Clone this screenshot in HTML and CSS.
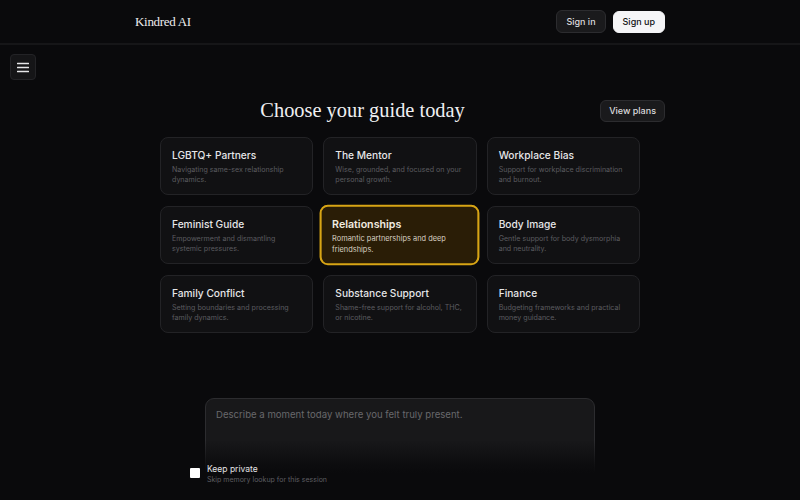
FILE: index.html
```html
<!DOCTYPE html>
<html lang="en">
<head>
    <meta charset="UTF-8">
    <meta name="viewport" content="width=device-width, initial-scale=1.0">
    <title>Kindred AI</title>
    <link rel="stylesheet" href="styles.css">
</head>
<body>

<header class="topbar">
    <div class="topbar-inner">
        <div class="logo">Kindred AI</div>
        <div class="auth">
            <button class="btn btn-dark">Sign in</button>
            <button class="btn btn-light">Sign up</button>
        </div>
    </div>
</header>

<main class="page">
    <!-- кнопка меню -->
    <button class="menu-toggle" aria-label="Menu">
        <svg width="12" height="11" viewBox="0 0 12 11">
            <path d="M0.5 1.5H11.5M0.5 5.5H11.5M0.5 9.5H11.5" stroke="#e6e6e8" stroke-width="1.3" stroke-linecap="round"/>
        </svg>
    </button>

    <div class="title-row">
        <h1 class="title">Choose your guide today</h1>
        <button class="btn btn-dark btn-plans">View plans</button>
    </div>

    <div class="guides">
        <div class="guide">
            <div class="guide-name">LGBTQ+ Partners</div>
            <div class="guide-desc">Navigating same-sex relationship dynamics.</div>
        </div>
        <div class="guide">
            <div class="guide-name">The Mentor</div>
            <div class="guide-desc">Wise, grounded, and focused on your personal growth.</div>
        </div>
        <div class="guide">
            <div class="guide-name">Workplace Bias</div>
            <div class="guide-desc">Support for workplace discrimination and burnout.</div>
        </div>
        <div class="guide">
            <div class="guide-name">Feminist Guide</div>
            <div class="guide-desc">Empowerment and dismantling systemic pressures.</div>
        </div>
        <div class="guide guide-active">
            <div class="guide-name">Relationships</div>
            <div class="guide-desc">Romantic partnerships and deep friendships.</div>
        </div>
        <div class="guide">
            <div class="guide-name">Body Image</div>
            <div class="guide-desc">Gentle support for body dysmorphia and neutrality.</div>
        </div>
        <div class="guide">
            <div class="guide-name">Family Conflict</div>
            <div class="guide-desc">Setting boundaries and processing family dynamics.</div>
        </div>
        <div class="guide">
            <div class="guide-name">Substance Support</div>
            <div class="guide-desc">Shame-free support for alcohol, THC, or nicotine.</div>
        </div>
        <div class="guide">
            <div class="guide-name">Finance</div>
            <div class="guide-desc">Budgeting frameworks and practical money guidance.</div>
        </div>
    </div>

    <div class="composer">
        <textarea class="composer-input" placeholder="Describe a moment today where you felt truly present."></textarea>
        <!-- затемнение низа и чекбокс -->
        <div class="composer-fade">
            <label class="private">
                <span class="private-box"></span>
                <span class="private-text">
                    <span class="private-title">Keep private</span>
                    <span class="private-sub">Skip memory lookup for this session</span>
                </span>
            </label>
        </div>
    </div>
</main>

</body>
</html>
```

FILE: styles.css
```css
* {
    box-sizing: border-box;
}
body {
    margin: 0;
    height: 500px;
    overflow: hidden;
    background-color: #0a0a0c;
    color: #e8e8ea;
    font-family: Inter, "Noto Sans", sans-serif;
}
button {
    font-family: inherit;
    cursor: pointer;
}
.topbar {
    height: 45px;
    border-bottom: 2px solid #161618;
}
.topbar-inner {
    width: 530px;
    height: 43px;
    margin: 0 auto;
    display: flex;
    align-items: center;
    justify-content: space-between;
}
.logo {
    font-family: "Liberation Serif", serif;
    font-size: 13px;
    color: #ececee;
    letter-spacing: -0.3px;
}
.auth {
    display: flex;
    gap: 7px;
    align-items: center;
}
.btn {
    height: 23px;
    padding: 0 9px;
    font-size: 9px;
    font-weight: 500;
    border-radius: 6px;
}
.btn-dark {
    background-color: #1a1a1c;
    border: 1px solid #2c2c2f;
    color: #dcdcde;
}
.btn-light {
    height: 22px;
    background-color: #f5f5f7;
    border: 1px solid #f5f5f7;
    color: #111113;
    padding: 0 9px;
}
.page {
    padding-top: 9px;
}
.menu-toggle {
    display: flex;
    align-items: center;
    justify-content: center;
    width: 26px;
    height: 26px;
    margin-left: 10px;
    padding: 0;
    background-color: #151517;
    border: 1px solid #232326;
    border-radius: 4px;
}
.title-row {
    width: 530px;
    margin: 19px auto 0;
    display: flex;
    align-items: center;
    gap: 10px;
}
.title {
    flex: 1;
    margin: 0;
    text-align: center;
    font-family: "Liberation Serif", serif;
    font-weight: 400;
    font-size: 20.4px;
    color: #f0f0f2;
}
.btn-plans {
    height: 22px;
    padding: 0 8px;
    font-size: 9px;
}
.guides {
    width: 480px;
    margin: 15px auto 0;
    display: grid;
    grid-template-columns: repeat(3, 1fr);
    column-gap: 10px;
    row-gap: 11px;
}
.guide {
    height: 58px;
    padding: 11px 11px 0;
    background-color: #111113;
    border: 1px solid #232326;
    border-radius: 8px;
}
.guide-name {
    font-size: 10.2px;
    font-weight: 500;
    line-height: 13px;
    color: #e6e6e8;
}
.guide-desc {
    margin-top: 3px;
    font-size: 7.1px;
    line-height: 9.5px;
    color: #5c5c60;
}
.guide-active {
    transform: scale(1.045);
    background-color: #2a1d06;
    border: 2px solid #d8a515;
    padding: 10px 10px 0;
}
.guide-active .guide-name {
    font-weight: 600;
    color: #f2ece0;
}
.guide-active .guide-desc {
    color: #d8d0c2;
}
.composer {
    position: relative;
    width: 390px;
    margin: 65px auto 0;
}
.composer-input {
    display: block;
    width: 100%;
    height: 86px;
    padding: 10px 10px;
    resize: none;
    background-color: #18181a;
    border: 1px solid #2c2c2f;
    border-radius: 9px;
    font-family: inherit;
    font-size: 9.6px;
    color: #e8e8ea;
}
.composer-input::placeholder {
    color: #68686c;
}
.composer-fade {
    position: absolute;
    left: -20px;
    right: -20px;
    top: 42px;
    height: 60px;
    padding: 24px 0 0 5px;
    background: linear-gradient(to bottom, rgba(10, 10, 12, 0) 0%, rgba(10, 10, 12, 0.8) 40%, #0a0a0c 55%);
}
.private {
    display: flex;
    align-items: flex-start;
    gap: 7px;
}
.private-box {
    width: 10px;
    height: 10px;
    margin-top: 4px;
    background-color: #ffffff;
    border-radius: 1px;
}
.private-text {
    display: flex;
    flex-direction: column;
}
.private-title {
    font-size: 8.5px;
    line-height: 11px;
    color: #e4e4e6;
}
.private-sub {
    font-size: 7px;
    line-height: 10px;
    color: #5e5e62;
}
```
